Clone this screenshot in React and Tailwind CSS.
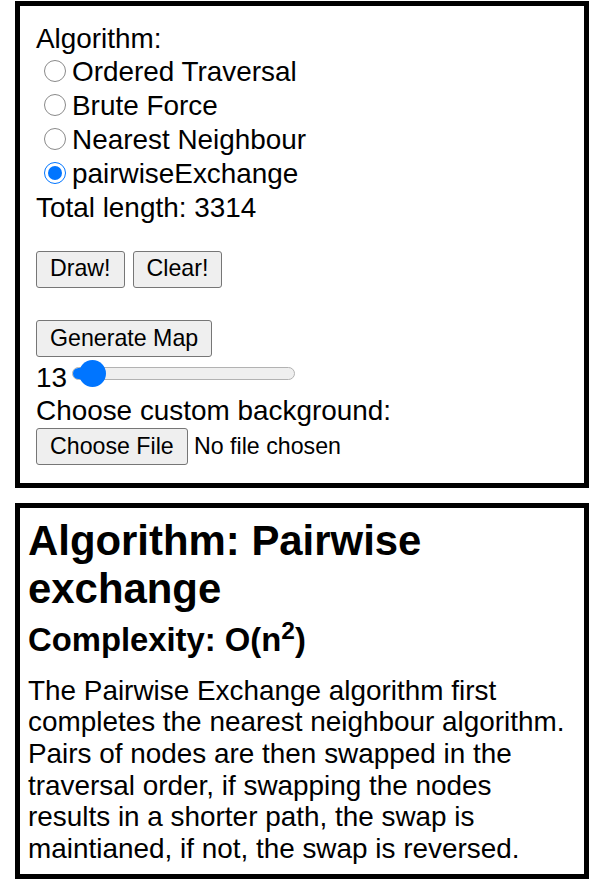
import React from 'react';

const Radio = ({ checked = false }) =>
  checked ? (
    <span className="mt-[4.5px] ml-[8px] mr-[6.5px] w-[21.5px] h-[21.5px] shrink-0 rounded-full border-[1.7px] border-[#0075ff] bg-white flex items-center justify-center">
      <span className="w-[13.5px] h-[13.5px] rounded-full bg-[#0075ff]" />
    </span>
  ) : (
    <span className="mt-[4.5px] ml-[8px] mr-[6.5px] w-[21.5px] h-[21.5px] shrink-0 rounded-full border-[1.7px] border-[#8a8a8a] bg-white" />
  );

const Btn = ({ children }) => (
  <span className="inline-flex items-center h-[37px] px-[13px] bg-[#efefef] border-[1.7px] border-[#767676] rounded-[3px] text-[23.2px] leading-none text-black">
    {children}
  </span>
);

const options = [
  { label: 'Ordered Traversal', checked: false },
  { label: 'Brute Force', checked: false },
  { label: 'Nearest Neighbour', checked: false },
  { label: 'pairwiseExchange', checked: true },
];

export default function App() {
  return (
    <div className="bg-white min-h-[887px] w-[590px] pt-[1px] px-[15px] font-['Liberation_Sans',Arial,sans-serif] text-black">
      {/* controls */}
      <div className="w-[574px] border-[5px] border-black pt-[17px] pb-[18px] px-[16px] text-[27.9px] leading-[32px]">
        <div className="h-[32.5px]">Algorithm:</div>
        {options.map((o) => (
          <div key={o.label} className="h-[34px] flex items-start">
            <Radio checked={o.checked} />
            <span>{o.label}</span>
          </div>
        ))}
        <div className="h-[29.5px]">Total length: 3314</div>

        <div className="mt-[29.5px] flex gap-[8px]">
          <Btn>Draw!</Btn>
          <Btn>Clear!</Btn>
        </div>

        <div className="mt-[32.3px] flex">
          <Btn>Generate Map</Btn>
        </div>

        <div className="h-[38px] flex items-start">
          <span className="mt-[5.5px]">13</span>
          <div className="relative ml-[5px] mt-[3px] w-[223px] h-[28px] flex items-center">
            <div className="w-full h-[13px] rounded-full bg-[#efefef] border border-[#b2b2b2] overflow-hidden">
              <div className="h-full w-[21px] bg-[#0075ff]" />
            </div>
            <span className="absolute left-[7px] top-[0.5px] w-[27px] h-[27px] rounded-full bg-[#0075ff]" />
          </div>
        </div>

        <div className="h-[33px]">Choose custom background:</div>
        <div className="flex items-center">
          <Btn>Choose File</Btn>
          <span className="ml-[6.3px] text-[23.2px] leading-none">No file chosen</span>
        </div>
      </div>

      {/* description */}
      <div className="mt-[15.7px] w-[574px] border-[5px] border-black pt-[9px] pb-[9px] px-[8px]">
        <h1 className="text-[41.9px] leading-[47.3px] font-bold">Algorithm: Pairwise exchange</h1>
        <h3 className="mt-[9px] text-[32.8px] leading-[37px] font-bold">
          Complexity: O(n<sup>2</sup>)
        </h3>
        <p className="mt-[16.5px] text-[27.9px] leading-[31.7px]">
          The Pairwise Exchange algorithm first completes the nearest neighbour algorithm. Pairs of
          nodes are then swapped in the traversal order, if swapping the nodes results in a shorter
          path, the swap is maintianed, if not, the swap is reversed.
        </p>
      </div>
    </div>
  );
}
